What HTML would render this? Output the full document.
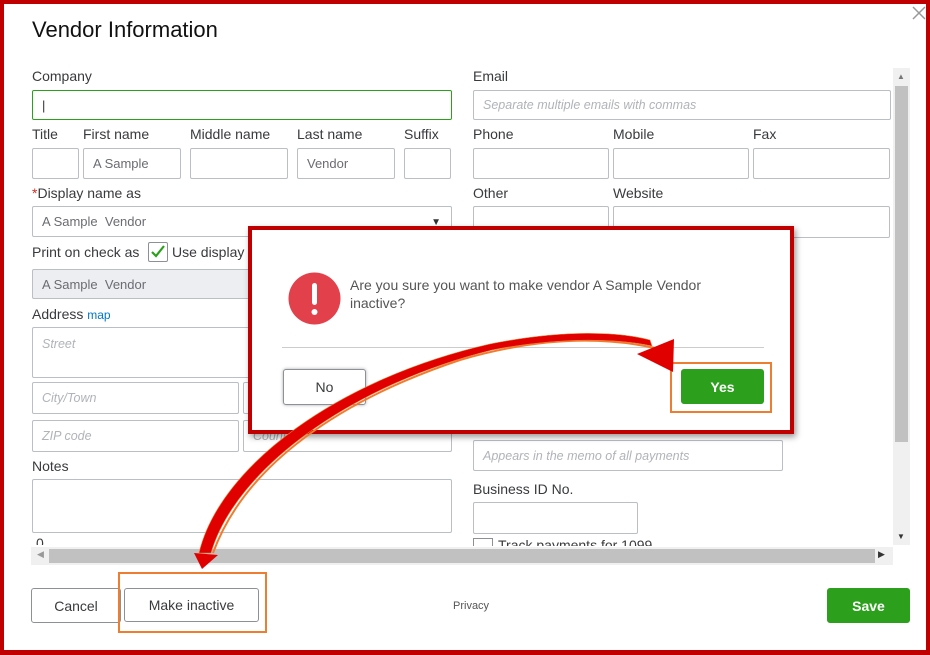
<!DOCTYPE html>
<html><head><meta charset="utf-8"><style>
*{box-sizing:border-box;margin:0;padding:0}
body{width:930px;height:655px;overflow:hidden;background:#fff;font-family:"Liberation Sans",sans-serif;color:#393a3d;position:relative}
.frame{position:absolute;left:0;top:0;width:930px;height:655px;border:4px solid #c00000;border-bottom-width:5px}
.a{position:absolute}
.l{position:absolute;font-size:14px;color:#393a3d}
.i{position:absolute;border:1px solid #babec5;border-radius:2px;background:#fff;font-size:13px;color:#6b6c72;padding-left:9px;display:flex;align-items:center}
.ph{font-style:italic;color:#b0b3b8;font-size:12.5px}
.btn{position:absolute;border:1px solid #8d9096;border-radius:3px;background:#fff;font-size:14px;color:#393a3d;display:flex;align-items:center;justify-content:center}
.g{background:#2ca01c;border-color:#2ca01c;color:#fff;font-weight:bold}
</style></head><body>
<div class="frame"></div>
<div class="a" style="left:32px;top:17px;font-size:22px;color:#111">Vendor Information</div>
<svg class="a" style="left:912px;top:6px" width="14" height="14"><path d="M1 1L13 13M13 1L1 13" stroke="#999" stroke-width="1.5"/></svg>

<div class="l" style="left:32px;top:68px">Company</div>
<div class="i" style="left:32px;top:90px;width:420px;height:30px;border-color:#2ca01c;color:#333">|</div>
<div class="l" style="left:32px;top:126px">Title</div>
<div class="l" style="left:83px;top:126px">First name</div>
<div class="l" style="left:190px;top:126px">Middle name</div>
<div class="l" style="left:297px;top:126px">Last name</div>
<div class="l" style="left:404px;top:126px">Suffix</div>
<div class="i" style="left:32px;top:148px;width:47px;height:31px"></div>
<div class="i" style="left:83px;top:148px;width:98px;height:31px">A Sample</div>
<div class="i" style="left:190px;top:148px;width:98px;height:31px"></div>
<div class="i" style="left:297px;top:148px;width:98px;height:31px">Vendor</div>
<div class="i" style="left:404px;top:148px;width:47px;height:31px"></div>
<div class="l" style="left:32px;top:185px"><span style="color:#d52b1e">*</span>Display name as</div>
<div class="i" style="left:32px;top:206px;width:420px;height:31px">A Sample&nbsp; Vendor<span style="position:absolute;right:10px;top:10px;font-size:10px;color:#333">▼</span></div>
<div class="l" style="left:32px;top:244px">Print on check as</div>
<div class="a" style="left:148px;top:242px;width:20px;height:20px;border:1px solid #8d9096;border-radius:2px"><svg width="18" height="18"><path d="M3 9l4 4 8-10" stroke="#2ca01c" stroke-width="2.2" fill="none"/></svg></div>
<div class="l" style="left:172px;top:244px">Use display</div>
<div class="i" style="left:32px;top:269px;width:420px;height:30px;background:#eceef1">A Sample&nbsp; Vendor</div>
<div class="l" style="left:32px;top:306px">Address <span style="color:#0077c5;font-size:12px">map</span></div>
<div class="i ph" style="left:32px;top:327px;width:420px;height:51px;align-items:flex-start;padding-top:9px">Street</div>
<div class="i ph" style="left:32px;top:382px;width:207px;height:32px">City/Town</div>
<div class="i ph" style="left:243px;top:382px;width:209px;height:32px"></div>
<div class="i ph" style="left:32px;top:420px;width:207px;height:32px">ZIP code</div>
<div class="i ph" style="left:243px;top:420px;width:209px;height:32px">Country</div>
<div class="l" style="left:32px;top:458px">Notes</div>
<div class="i" style="left:32px;top:479px;width:420px;height:54px"></div>
<div class="l" style="left:36px;top:535px;height:10px;overflow:hidden">0</div>

<div class="l" style="left:473px;top:68px">Email</div>
<div class="i ph" style="left:473px;top:90px;width:418px;height:30px">Separate multiple emails with commas</div>
<div class="l" style="left:473px;top:126px">Phone</div>
<div class="l" style="left:613px;top:126px">Mobile</div>
<div class="l" style="left:753px;top:126px">Fax</div>
<div class="i" style="left:473px;top:148px;width:136px;height:31px"></div>
<div class="i" style="left:613px;top:148px;width:136px;height:31px"></div>
<div class="i" style="left:753px;top:148px;width:137px;height:31px"></div>
<div class="l" style="left:473px;top:185px">Other</div>
<div class="l" style="left:613px;top:185px">Website</div>
<div class="i" style="left:473px;top:206px;width:136px;height:32px"></div>
<div class="i" style="left:613px;top:206px;width:277px;height:32px"></div>
<div class="i ph" style="left:473px;top:440px;width:310px;height:31px">Appears in the memo of all payments</div>
<div class="l" style="left:473px;top:481px">Business ID No.</div>
<div class="i" style="left:473px;top:502px;width:165px;height:32px"></div>
<div class="a" style="left:473px;top:538px;width:20px;height:8px;border:1px solid #8d9096;border-bottom:none"></div>
<div class="l" style="left:498px;top:537px;height:9px;overflow:hidden">Track payments for 1099</div>

<div class="a" style="left:893px;top:68px;width:17px;height:477px;background:#f0f0f0"></div>
<div class="a" style="left:895px;top:86px;width:13px;height:356px;background:#c1c1c1"></div>
<div class="a" style="left:897px;top:72px;font-size:8px;color:#777">▲</div>
<div class="a" style="left:897px;top:532px;font-size:8px;color:#333">▼</div>
<div class="a" style="left:31px;top:547px;width:862px;height:18px;background:#f0f0f0"></div>
<div class="a" style="left:49px;top:549px;width:826px;height:14px;background:#c1c1c1"></div>
<div class="a" style="left:37px;top:549px;font-size:9px;color:#999">◀</div>
<div class="a" style="left:878px;top:549px;font-size:9px;color:#333">▶</div>

<div class="btn" style="left:31px;top:588px;width:90px;height:35px">Cancel</div>
<div class="btn" style="left:124px;top:588px;width:135px;height:34px">Make inactive</div>
<div class="a" style="left:118px;top:572px;width:149px;height:61px;border:2px solid #ed7d31"></div>
<div class="a" style="left:453px;top:600px;font-size:11px;color:#555">Privacy</div>
<div class="btn g" style="left:827px;top:588px;width:83px;height:35px">Save</div>

<!-- dialog -->
<div class="a" style="left:248px;top:226px;width:546px;height:208px;background:#fff;border:4px solid #c00000;box-shadow:2px 3px 6px rgba(0,0,0,.4)"></div>
<svg class="a" style="left:288px;top:272px" width="53" height="53"><circle cx="26.5" cy="26.5" r="26" fill="#e2404a"/><rect x="24" y="11" width="5" height="22" rx="2.5" fill="#fff"/><circle cx="26.5" cy="40" r="3" fill="#fff"/></svg>
<div class="a" style="left:350px;top:276px;font-size:14px;color:#555;line-height:18px;width:430px">Are you sure you want to make vendor A Sample Vendor<br>inactive?</div>
<div class="a" style="left:282px;top:347px;width:482px;height:1px;background:#ccc"></div>
<div class="btn" style="left:283px;top:369px;width:83px;height:36px;border-color:#8d9096;box-shadow:0 0 3px #aaa">No</div>
<div class="btn g" style="left:681px;top:369px;width:83px;height:35px">Yes</div>
<div class="a" style="left:670px;top:362px;width:102px;height:51px;border:2px solid #ed7d31"></div>

<svg class="a" style="left:0;top:0" width="930" height="655">
<path d="M213 553 C245 465 340 400 460 360 C535 338 600 336 655 348" stroke="#ed7d31" stroke-width="2" fill="none"/>
<path d="M199 553 C220 465 340 378 490 344 C565 329 620 332 650 340 L652 346 C620 339 565 336 492 350 C350 385 235 470 211 553 Z" fill="#e00000" stroke="#ed7d31" stroke-width="0.6"/>
<path d="M194 553 L218 555 L202 569 Z" fill="#e00000"/>
<path d="M637 354 L674 339 L673 372 Z" fill="#e00000"/>
</svg>
</body></html>
